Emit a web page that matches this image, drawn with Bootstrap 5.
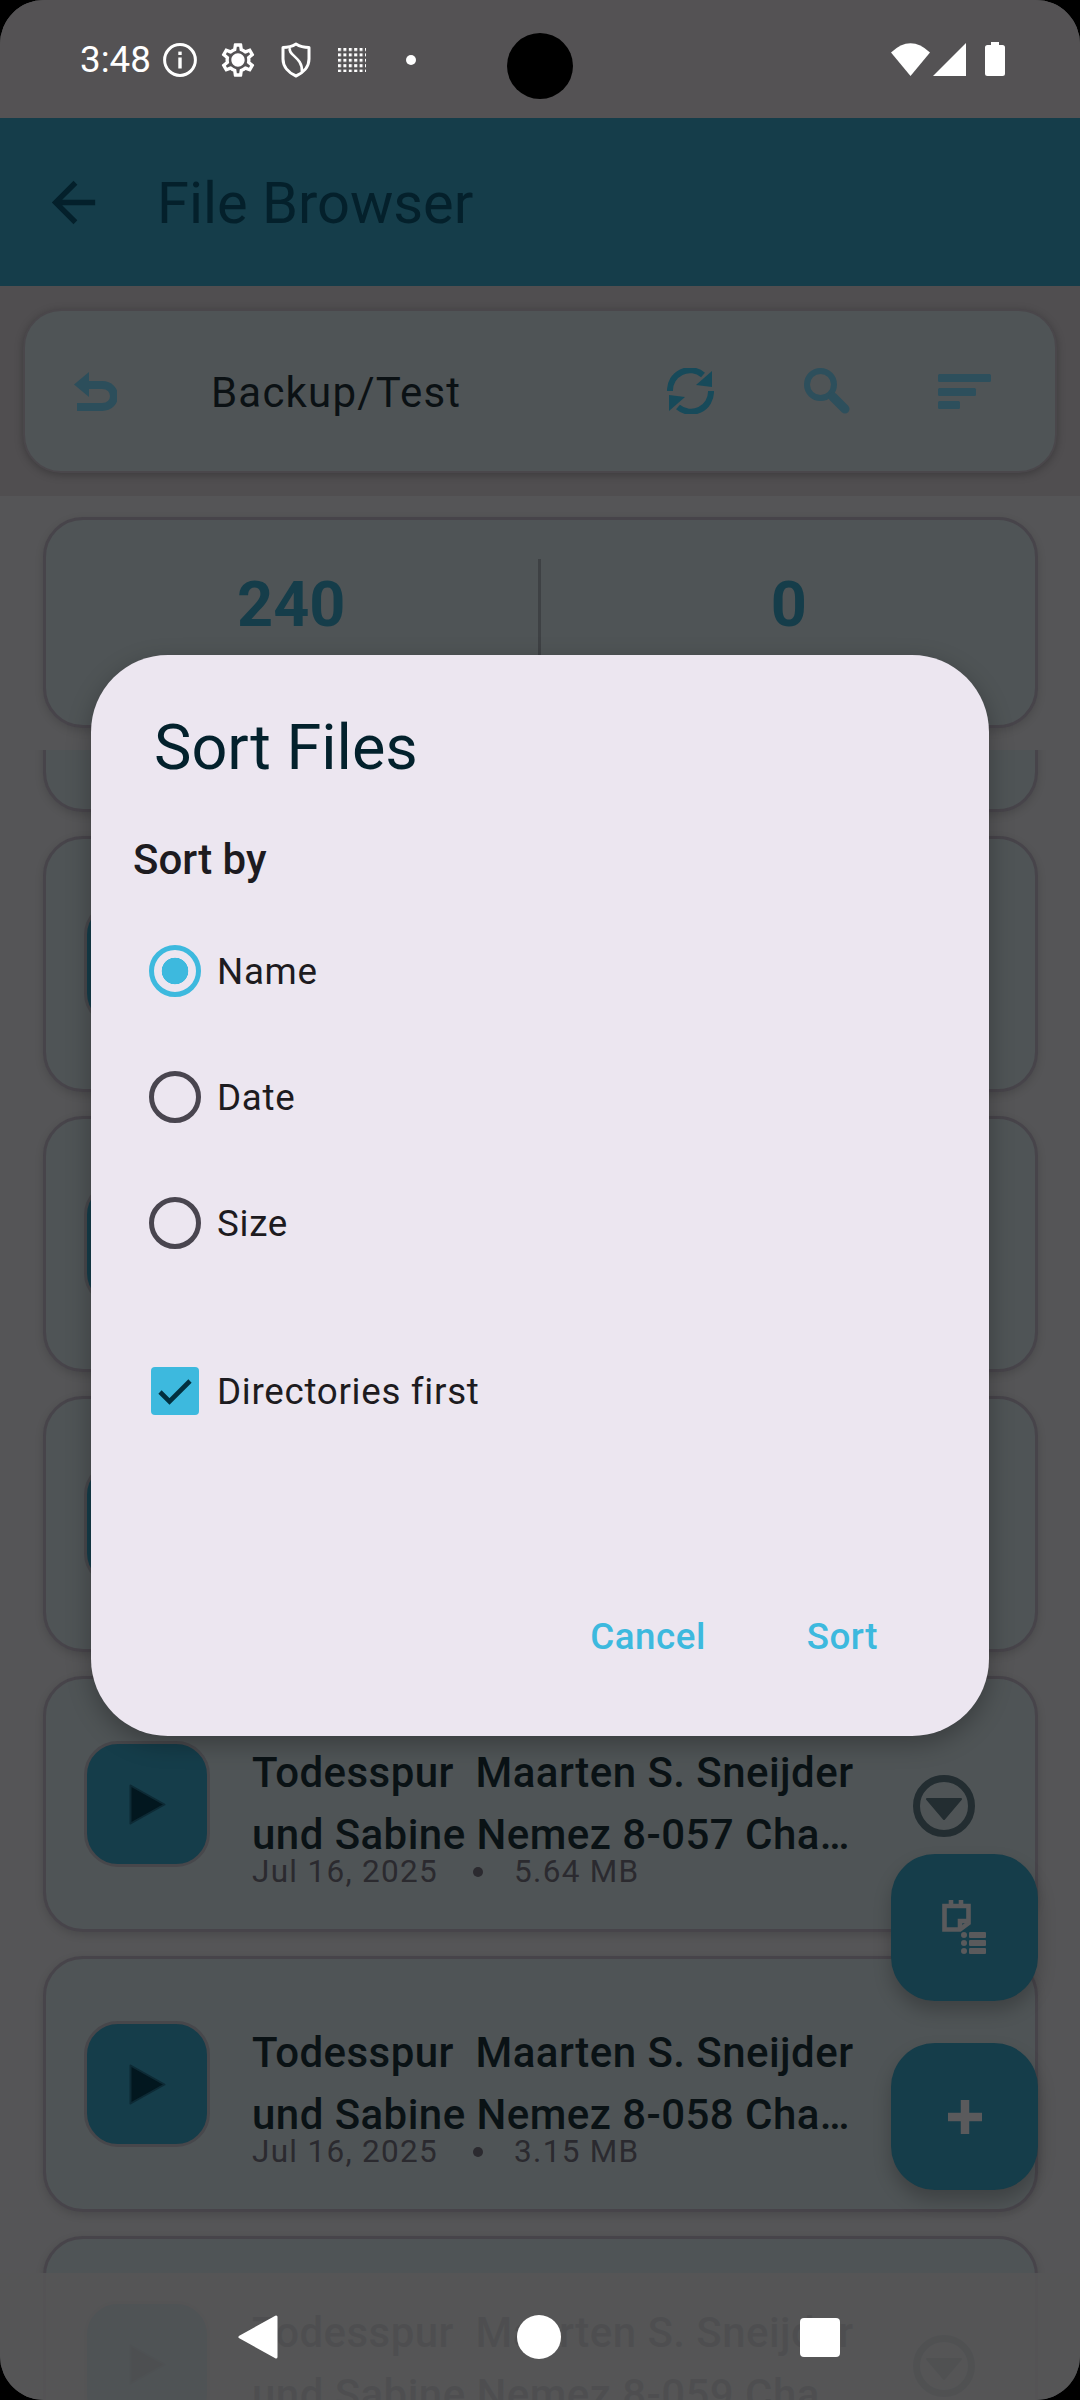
<!DOCTYPE html>
<html lang="en">
<head>
  <meta charset="UTF-8" />
  <meta name="viewport" content="width=device-width, initial-scale=1.0"/>
  <title>File Browser</title>
  <link href="https://cdn.jsdelivr.net/npm/bootstrap@5.3.0/dist/css/bootstrap.min.css" rel="stylesheet">
  <style>
    html, body { margin: 0; background: #000; }
    body { font-family: Roboto, "Liberation Sans", sans-serif; }
    svg { display: block; flex: none; }

    .screen {
      width: 1080px; height: 2400px;
      position: relative; overflow: hidden;
      border-radius: 44px;
      background: #555557;
      display: flex; flex-direction: column;
    }

    /* status bar */
    .status-bar { height: 118px; background: #545254; padding: 0 75px 0 80px; color: #fff; flex: none; }
    .status-left { padding-top: 2px; }
    .status-time { font-size: 36.75px; line-height: 116px; width: 83px; }
    .ic-gear { margin: 0 23px 0 21px; }
    .ic-shield { margin-right: 27px; }
    .punch-hole { position: absolute; left: 507px; top: 33px; width: 66px; height: 66px; border-radius: 50%; background: #000; }
    .status-dot { width: 10px; height: 10px; border-radius: 50%; background: #fff; margin-left: 40px; }
    .battery { width: 20px; height: 34px; margin-left: 19px; }

    /* app bar */
    .app-bar { height: 168px; background: #153d4a; padding: 0 0 0 41px; flex: none; }
    .app-title { font-size: 57.75px; color: #04202b; margin-left: 51px; line-height: 1; padding-top: 3px; }

    /* toolbar */
    .tool-zone { height: 210px; background: #504e50; padding: 23px 23px 0; flex: none; }
    .tool-card {
      height: 164px; background: #4f5456; border: 2px solid #4a474b; border-radius: 38px;
      box-shadow: 0 2px 8px rgba(0,0,0,.25);
      padding: 0 64px 0 49px;
    }
    .path-label { font-size: 42px; letter-spacing: 1.2px; color: #0b1114; margin-left: 94px; padding-top: 3px; }
    .tool-sync { margin-left: auto; }
    .tool-search { margin-left: 90px; }
    .tool-sort { margin-left: 88px; }

    /* summary + list */
    .box-card {
      background: #4f5456;
      border: 3px solid #47444a; border-radius: 40px;
      box-shadow: 0 3px 8px rgba(0,0,0,.14);
    }
    .stat-card { height: 211px; margin: 21px 42px 0 43px; padding: 39px 0; flex: none; }
    .stat-col { text-align: center; height: 100%; padding-right: 4px; }
    .stat-col + .stat-col { border-left: 3px solid #3e4144; margin-left: -3px; padding: 0 0 0 5px; }
    .stat-num { font-size: 63px; font-weight: 700; line-height: 1; color: #153d4a; padding-top: 14px; }

    .file-list { margin-top: 22px; flex: 1; min-height: 0; overflow: hidden; }
    .file-stack { margin: -194px 42px 0 43px; display: flex; flex-direction: column; gap: 24px; }
    .file-row { height: 256px; padding: 62px 0 0 38px; flex-direction: row; align-items: flex-start; }
    .file-thumb {
      width: 126px; height: 126px; flex: none;
      background: #153d4a; border: 3px solid #47474b; border-radius: 34px;
    }
    .file-text { width: 610px; margin-left: 42px; margin-top: 1px; flex: none; }
    .file-title {
      font-size: 42px; font-weight: 500; line-height: 62px; letter-spacing: .45px; color: #0a1215;
      white-space: pre;
    }
    .file-meta { font-size: 31.5px; line-height: 12px; color: #2b2a2f; letter-spacing: 1.3px; }
    .meta-dot { width: 10px; height: 10px; border-radius: 50%; background: #2b2a2f; margin: 0 31px 0 35px; }
    .file-more { margin: 34px 0 0 51px; }

    /* floating buttons */
    .fab {
      position: absolute; left: 891px;
      width: 147px; height: 147px; border-radius: 44px;
      background: #153d4a; box-shadow: 0 10px 18px rgba(0,0,0,.22);
    }
    .fab-one { top: 1854px; }
    .fab-two { top: 2043px; }

    /* nav bar */
    .nav-strip {
      position: absolute; left: 0; right: 0; bottom: 0; height: 127px;
      background: rgba(85,85,87,.9);
    }
    .nav-home { width: 44px; height: 44px; border-radius: 50%; background: #fff; }
    .nav-recent { width: 40px; height: 39px; border-radius: 4px; background: #fff; }

    /* sort dialog */
    .sort-dialog {
      position: absolute; left: 91px; top: 655px;
      width: 898px; height: 1081px;
      background: #ece6f0; border: 0; border-radius: 77px;
      box-shadow: 0 8px 24px rgba(0,0,0,.28);
    }
    .sort-title { font-size: 63px; font-weight: 400; line-height: 78px; color: #03212c; margin: 54px 0 0 63px; }
    .sort-sub { font-size: 42px; font-weight: 500; line-height: 50px; color: #1d1b20; margin: 48px 0 23px 42px; }
    .opt-row { height: 126px; margin: 0; padding: 0 0 0 58px; display: flex; align-items: center; }
    .opt-row .form-check-input { float: none; margin: 0; flex: none; box-shadow: none; }
    .opt-row .form-check-label { font-size: 36.75px; letter-spacing: .7px; color: #1d1b20; margin-left: 16px; padding-top: 1px; }
    .opt-radio {
      width: 52px; height: 52px; background-color: transparent; background-image: none;
      border: 5.5px solid #49454f;
    }
    .opt-radio:checked {
      background-color: transparent; border-color: #3db9de;
      background-image: radial-gradient(circle, #3db9de 13px, transparent 13.6px);
    }
    .opt-check {
      width: 48px; height: 48px; margin-left: 2px !important;
      border: 0; border-radius: 5px;
    }
    .opt-check:checked {
      background-color: #3db9de;
      background-size: 34px 34px;
      background-image: url("data:image/svg+xml,%3csvg xmlns='http://www.w3.org/2000/svg' viewBox='0 0 34 34'%3e%3cpath fill='none' stroke='%2302303f' stroke-width='4.6' d='M2 18l9.5 9.5L32 7'/%3e%3c/svg%3e");
    }
    .opt-check + .form-check-label { margin-left: 18px; }
    .check-row { margin-top: 42px; padding-left: 58px; }
    .sort-actions { margin-top: auto; margin-bottom: 59px; padding-right: 81px; gap: 41px; }
    .sort-btn {
      font-size: 36.75px; font-weight: 500; letter-spacing: .5px; line-height: 80px; color: #3db9de;
      padding: 4px 30px 0; border: 0; text-decoration: none;
    }
    .sort-btn:hover { color: #3db9de; }
  </style>
</head>

<body>
  <svg width="0" height="0" style="position:absolute">
    <symbol id="ic-play" viewBox="0 0 37 41"><path fill="#02171f" stroke="#0d2a35" stroke-width="2" stroke-linejoin="round" d="M1.5 1.5L35.5 20.5L1.5 39.5Z"/></symbol>
    <symbol id="ic-more" viewBox="0 0 62 62"><circle cx="31" cy="31" r="27.5" fill="none" stroke="#232d31" stroke-width="7"/><path fill="#232d31" stroke="#232d31" stroke-width="2" stroke-linejoin="round" d="M14 24H48L31 44Z"/></symbol>
    <pattern id="dots" width="5.4" height="5.4" patternUnits="userSpaceOnUse"><rect width="3" height="3" fill="#fff"/></pattern>
  </svg>

  <div class="screen">
    <div class="status-bar d-flex align-items-center">
      <div class="status-left d-flex align-items-center">
        <span class="status-time">3:48</span>
        <svg width="34" height="34" viewBox="0 0 34 34"><circle cx="17" cy="17" r="15.4" fill="none" stroke="#fff" stroke-width="3"/><rect x="15.3" y="14.5" width="3.4" height="11" fill="#fff"/><rect x="15.3" y="8.6" width="3.4" height="3.4" fill="#fff"/></svg>
        <svg class="ic-gear" width="40" height="40" viewBox="0 0 24 24"><path fill="#fff" d="M19.43 12.98c.04-.32.07-.64.07-.98 0-.34-.03-.66-.07-.98l2.11-1.65c.19-.15.24-.42.12-.64l-2-3.46c-.09-.16-.26-.25-.44-.25-.06 0-.12.01-.17.03l-2.49 1c-.52-.4-1.08-.73-1.69-.98l-.38-2.65C14.46 2.18 14.25 2 14 2h-4c-.25 0-.46.18-.49.42l-.38 2.65c-.61.25-1.17.59-1.69.98l-2.49-1c-.06-.02-.12-.03-.18-.03-.17 0-.34.09-.43.25l-2 3.46c-.13.22-.07.49.12.64l2.11 1.65c-.04.32-.07.65-.07.98 0 .33.03.66.07.98l-2.11 1.65c-.19.15-.24.42-.12.64l2 3.46c.09.16.26.25.44.25.06 0 .12-.01.17-.03l2.49-1c.52.4 1.08.73 1.69.98l.38 2.65c.03.24.24.42.49.42h4c.25 0 .46-.18.49-.42l.38-2.65c.61-.25 1.17-.59 1.69-.98l2.49 1c.06.02.12.03.18.03.17 0 .34-.09.43-.25l2-3.46c.12-.22.07-.49-.12-.64l-2.11-1.65zm-1.98-1.71c.04.31.05.52.05.73 0 .21-.02.43-.05.73l-.14 1.13.89.7 1.08.84-.7 1.21-1.27-.51-1.04-.42-.9.68c-.43.32-.84.56-1.25.73l-1.06.43-.16 1.13-.2 1.35h-1.4l-.19-1.35-.16-1.13-1.06-.43c-.43-.18-.83-.41-1.23-.71l-.91-.7-1.06.43-1.27.51-.7-1.21 1.08-.84.89-.7-.14-1.13c-.03-.31-.05-.54-.05-.74s.02-.43.05-.73l.14-1.13-.89-.7-1.08-.84.7-1.21 1.27.51 1.04.42.9-.68c.43-.32.84-.56 1.25-.73l1.06-.43.16-1.13.2-1.35h1.39l.19 1.35.16 1.13 1.06.43c.43.18.83.41 1.23.71l.91.7 1.06-.43 1.27-.51.7 1.21-1.07.85-.89.7.14 1.13zM12 8c-2.21 0-4 1.79-4 4s1.79 4 4 4 4-1.79 4-4-1.79-4-4-4z"/></svg>
        <svg class="ic-shield" width="30" height="36" viewBox="0 0 30 36"><path fill="none" stroke="#fff" stroke-width="3" stroke-linejoin="round" d="M15 2C19 4.5 24 5.5 28 5.5V17C28 25 22 31 15 34C8 31 2 25 2 17V5.5C6 5.5 11 4.5 15 2Z"/><path fill="none" stroke="#fff" stroke-width="2.6" d="M9 6C6 13 22 15 21 30"/></svg>
        <svg width="28" height="24" viewBox="0 0 28 24"><rect width="28" height="24" fill="url(#dots)"/></svg>
        <span class="status-dot"></span>
      </div>
      <div class="d-flex align-items-center ms-auto">
        <svg width="39" height="33" viewBox="0 0 39 33"><path fill="#fff" d="M0 9.5Q19.5 -9 39 9.5L19.5 33Z"/></svg>
        <svg width="33" height="33" viewBox="0 0 33 33" style="margin-left:3px"><path fill="#fff" d="M33 0V33H0Z"/></svg>
        <svg class="battery" viewBox="0 0 20 34"><path fill="#fff" d="M6 0H14V3H17.5Q20 3 20 5.5V31.5Q20 34 17.5 34H2.5Q0 34 0 31.5V5.5Q0 3 2.5 3H6Z"/></svg>
      </div>
    </div>
    <span class="punch-hole"></span>

    <nav class="navbar app-bar flex-nowrap justify-content-start">
      <svg width="65" height="65" viewBox="0 0 24 24"><path fill="#04202b" d="M20 11H7.83l5.59-5.59L12 4l-8 8 8 8 1.41-1.41L7.83 13H20v-2z"/></svg>
      <span class="app-title">File Browser</span>
    </nav>

    <div class="tool-zone">
      <div class="card tool-card flex-row align-items-center">
        <svg width="43" height="39" viewBox="0 0 43 39"><path fill="none" stroke="#2c4e5b" stroke-width="8" d="M12 13H28C44 13 44 35 28 35H3"/><path fill="#2c4e5b" d="M0 12.5L15 0V25Z"/></svg>
        <span class="path-label">Backup/Test</span>
        <svg class="tool-sync" width="47" height="46" viewBox="0 0 47 46"><g fill="none" stroke="#174a5a" stroke-width="6"><path d="M3 23A20 20 0 0 1 36 7"/><path d="M44 23A20 20 0 0 1 11 39"/></g><path fill="#174a5a" d="M45 3V19L29 17Z"/><path fill="#174a5a" d="M2 43V27L18 29Z"/></svg>
        <svg class="tool-search" width="46" height="46" viewBox="0 0 46 46"><circle cx="16.5" cy="16.5" r="13.5" fill="none" stroke="#2d4f5c" stroke-width="6"/><path stroke="#2d4f5c" stroke-width="9" stroke-linecap="round" d="M29 29L41 41"/></svg>
        <svg class="tool-sort" width="53" height="35" viewBox="0 0 53 35"><g fill="#2d4f5c"><rect width="53" height="8" rx="1.5"/><rect y="14" width="38" height="8" rx="1.5"/><rect y="27" width="22" height="8" rx="1.5"/></g></svg>
      </div>
    </div>

    <div class="card box-card stat-card">
      <div class="row g-0 h-100">
        <div class="col-6 stat-col"><div class="stat-num">240</div></div>
        <div class="col-6 stat-col"><div class="stat-num">0</div></div>
      </div>
    </div>

    <div class="file-list">
      <div class="file-stack">
        <div class="card box-card file-row">
          <div class="file-thumb d-flex align-items-center justify-content-center"><svg width="37" height="41"><use href="#ic-play"/></svg></div>
          <div class="file-text">
            <div class="file-title">Todesspur  Maarten S. Sneijder</div>
            <div class="file-title text-truncate">und Sabine Nemez 8-053 Chapter</div>
          </div>
          <svg class="file-more" width="62" height="62"><use href="#ic-more"/></svg>
        </div>
        <div class="card box-card file-row">
          <div class="file-thumb d-flex align-items-center justify-content-center"><svg width="37" height="41"><use href="#ic-play"/></svg></div>
          <div class="file-text">
            <div class="file-title">Todesspur  Maarten S. Sneijder</div>
            <div class="file-title text-truncate">und Sabine Nemez 8-054 Chapter</div>
          </div>
          <svg class="file-more" width="62" height="62"><use href="#ic-more"/></svg>
        </div>
        <div class="card box-card file-row">
          <div class="file-thumb d-flex align-items-center justify-content-center"><svg width="37" height="41"><use href="#ic-play"/></svg></div>
          <div class="file-text">
            <div class="file-title">Todesspur  Maarten S. Sneijder</div>
            <div class="file-title text-truncate">und Sabine Nemez 8-055 Chapter</div>
          </div>
          <svg class="file-more" width="62" height="62"><use href="#ic-more"/></svg>
        </div>
        <div class="card box-card file-row">
          <div class="file-thumb d-flex align-items-center justify-content-center"><svg width="37" height="41"><use href="#ic-play"/></svg></div>
          <div class="file-text">
            <div class="file-title">Todesspur  Maarten S. Sneijder</div>
            <div class="file-title text-truncate">und Sabine Nemez 8-056 Chapter</div>
          </div>
          <svg class="file-more" width="62" height="62"><use href="#ic-more"/></svg>
        </div>
        <div class="card box-card file-row">
          <div class="file-thumb d-flex align-items-center justify-content-center"><svg width="37" height="41"><use href="#ic-play"/></svg></div>
          <div class="file-text">
            <div class="file-title">Todesspur  Maarten S. Sneijder</div>
            <div class="file-title text-truncate">und Sabine Nemez 8-057 Chapter</div>
            <div class="file-meta d-flex align-items-center"><span>Jul 16, 2025</span><span class="meta-dot"></span><span>5.64 MB</span></div>
          </div>
          <svg class="file-more" width="62" height="62"><use href="#ic-more"/></svg>
        </div>
        <div class="card box-card file-row">
          <div class="file-thumb d-flex align-items-center justify-content-center"><svg width="37" height="41"><use href="#ic-play"/></svg></div>
          <div class="file-text">
            <div class="file-title">Todesspur  Maarten S. Sneijder</div>
            <div class="file-title text-truncate">und Sabine Nemez 8-058 Chapter</div>
            <div class="file-meta d-flex align-items-center"><span>Jul 16, 2025</span><span class="meta-dot"></span><span>3.15 MB</span></div>
          </div>
          <svg class="file-more" width="62" height="62"><use href="#ic-more"/></svg>
        </div>
        <div class="card box-card file-row">
          <div class="file-thumb d-flex align-items-center justify-content-center"><svg width="37" height="41"><use href="#ic-play"/></svg></div>
          <div class="file-text">
            <div class="file-title">Todesspur  Maarten S. Sneijder</div>
            <div class="file-title text-truncate">und Sabine Nemez 8-059 Chapter</div>
          </div>
          <svg class="file-more" width="62" height="62"><use href="#ic-more"/></svg>
        </div>
      </div>
    </div>

    <button class="btn fab fab-one p-0 d-flex align-items-center justify-content-center" type="button" aria-label="Batch">
      <svg width="44" height="54" viewBox="0 0 44 54" style="margin:-1px 0 0 -2px"><g fill="none" stroke="#5a5a5c" stroke-width="4.6"><path d="M2.5 6H26.5V23L18 29.5H2.5Z"/><path d="M9 0V7M19 0V7"/><path d="M18 29.5V21H26.5"/></g><g fill="#5a5a5c"><circle cx="22" cy="35" r="3"/><rect x="27" y="32" width="17" height="6" rx="1"/><circle cx="22" cy="43" r="3"/><rect x="27" y="40" width="17" height="6" rx="1"/><circle cx="22" cy="51" r="3"/><rect x="27" y="48" width="17" height="6" rx="1"/></g></svg>
    </button>
    <button class="btn fab fab-two p-0 d-flex align-items-center justify-content-center" type="button" aria-label="Add">
      <svg width="34" height="34" viewBox="0 0 34 34"><path stroke="#5a5a5c" stroke-width="8.5" d="M17 0V34M0 17H34"/></svg>
    </button>

    <div class="nav-strip d-flex align-items-center">
      <svg width="40" height="44" viewBox="0 0 40 44" style="position:absolute;left:238px;top:42px"><path fill="#fff" stroke="#fff" stroke-width="3" stroke-linejoin="round" d="M38 2V42L2 22Z"/></svg>
      <span class="nav-home position-absolute" style="left:517px;top:42px"></span>
      <span class="nav-recent position-absolute" style="left:800px;top:45px"></span>
    </div>

    <div class="card sort-dialog">
      <h5 class="sort-title">Sort Files</h5>
      <div class="sort-sub">Sort by</div>
      <div class="form-check opt-row">
        <input class="form-check-input opt-radio" type="radio" name="sortBy" id="sortName" checked>
        <label class="form-check-label" for="sortName">Name</label>
      </div>
      <div class="form-check opt-row">
        <input class="form-check-input opt-radio" type="radio" name="sortBy" id="sortDate">
        <label class="form-check-label" for="sortDate">Date</label>
      </div>
      <div class="form-check opt-row">
        <input class="form-check-input opt-radio" type="radio" name="sortBy" id="sortSize">
        <label class="form-check-label" for="sortSize">Size</label>
      </div>
      <div class="form-check opt-row check-row">
        <input class="form-check-input opt-check" type="checkbox" id="dirsFirst" checked>
        <label class="form-check-label" for="dirsFirst">Directories first</label>
      </div>
      <div class="sort-actions d-flex justify-content-end">
        <button class="btn btn-link sort-btn" type="button">Cancel</button>
        <button class="btn btn-link sort-btn" type="button">Sort</button>
      </div>
    </div>
  </div>

  <script src="https://cdn.jsdelivr.net/npm/bootstrap@5.3.0/dist/js/bootstrap.bundle.min.js"></script>
</body>
</html>
